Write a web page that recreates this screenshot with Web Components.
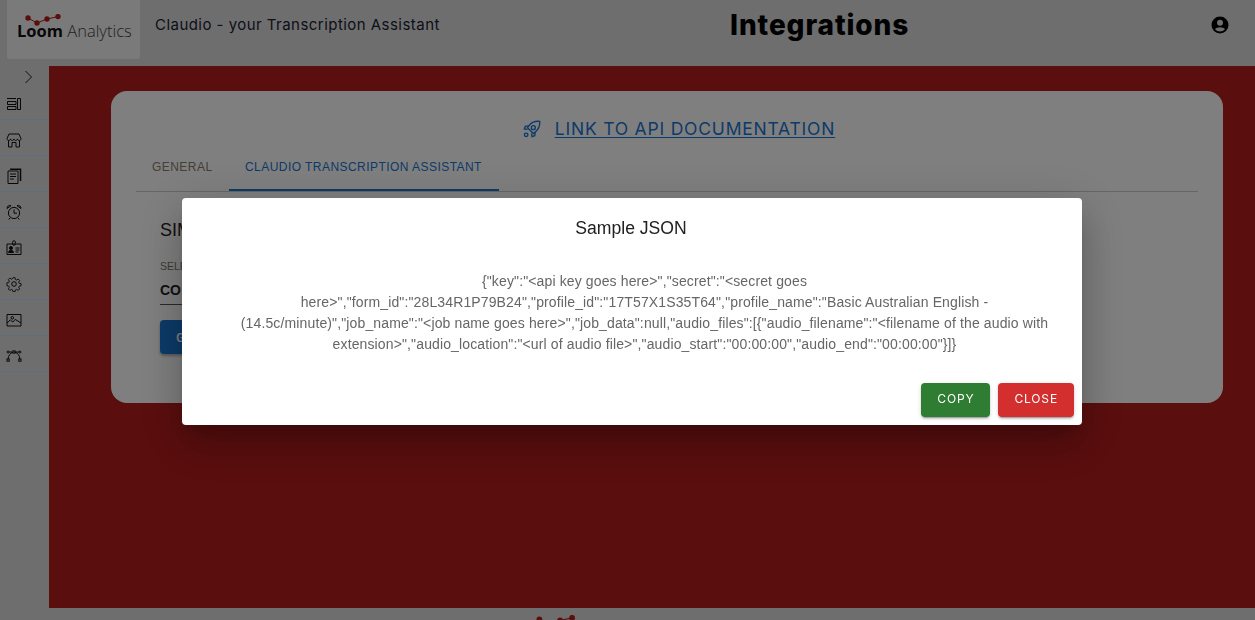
<!DOCTYPE html>
<html>
<head>
<meta charset="utf-8">
<title>Integrations</title>
<style>
    html, body { margin: 0; height: 100%; overflow: hidden; }
    body { font-family: "Liberation Sans", Arial, sans-serif; background: #dcdcdc; }
</style>
</head>
<body>
<app-shell>
    <app-header slot="header"></app-header>
    <side-nav slot="nav">
        <nav-item icon="list"></nav-item>
        <nav-item icon="shop"></nav-item>
        <nav-item icon="docs"></nav-item>
        <nav-item icon="alarm"></nav-item>
        <nav-item icon="badge"></nav-item>
        <nav-item icon="gear"></nav-item>
        <nav-item icon="image"></nav-item>
        <nav-item icon="curve"></nav-item>
    </side-nav>
    <integration-card></integration-card>
    <app-footer slot="footer"></app-footer>
</app-shell>
<sample-dialog heading="Sample JSON">
    {"key":"&lt;api key goes here&gt;","secret":"&lt;secret goes here&gt;","form_id":"28L34R1P79B24","profile_id":"17T57X1S35T64","profile_name":"Basic Australian English - (14.5c/minute)","job_name":"&lt;job name goes here&gt;","job_data":null,"audio_files":[{"audio_filename":"&lt;filename of the audio with extension&gt;","audio_location":"&lt;url of audio file&gt;","audio_start":"00:00:00","audio_end":"00:00:00"}]}
</sample-dialog>

<script>
    (function(window, document) {

        const LOGO_DOTS = `
            <svg width="44" height="14" viewBox="0 0 44 14">
                <path d="M4 4 L13 9 L23 5 L34 2.600" fill="none" stroke="#b71c1c" stroke-width="1"/>
                <circle cx="4" cy="4" r="2.700" fill="#b71c1c"/>
                <circle cx="13" cy="9" r="2.700" fill="#b71c1c"/>
                <circle cx="23" cy="5" r="2.700" fill="#b71c1c"/>
                <circle cx="34" cy="2.600" r="2.700" fill="#b71c1c"/>
            </svg>`;

        // Sidebar icons, all on a 16 unit grid.
        const ICONS = {
            list: '<path d="M1 2.500h9M1.500 5.500h8.500v3H1.500zM1.500 10.500h8.500v3H1.500zM11.500 2.500h3v11h-3z"/>',
            shop: '<path d="M3 2h10l2 4.600c0 1.200-.8 1.900-1.800 1.900-1 0-1.600-.7-1.700-1.600 0 .9-.9 1.600-1.800 1.600S8.100 7.800 8 6.900c-.1.900-.8 1.600-1.700 1.600S4.600 7.800 4.500 6.900c-.1.900-.7 1.600-1.700 1.600S1 7.800 1 6.600z"/><path d="M2.500 8.500V15h3.500v-4.500h4V15h3.500V8.500"/>',
            docs: '<path d="M2 3h10v12.500H2z"/><path d="M4 1.200h10.500V13" stroke-width="1.500"/><path d="M4 6h6M4 8.500h6M4 11h4"/>',
            alarm: '<circle cx="8" cy="9" r="5.600"/><path d="M8 5.500V9.200h3M1 4.500a2.800 2.800 0 0 1 4-2.800zM15 4.500a2.800 2.800 0 0 0-4-2.800zM4 14l-1.300 1.500M12 14l1.300 1.500"/>',
            badge: '<path d="M1 4h14v10.500H1z"/><rect x="6.600" y=".8" width="2.800" height="4.500" rx="1.400"/><circle cx="5" cy="8" r="1.500" fill="currentColor"/><path d="M2.600 12.500c0-3 4.800-3 4.800 0z" fill="currentColor"/><path d="M9.500 8h4M9.500 10h4M9.500 12h3"/>',
            gear: '<circle cx="8" cy="8" r="2.300"/><path d="M6.800 1h2.400l.4 2 1.300.6 1.800-1.100 1.600 1.600-1.100 1.800.6 1.300 2 .4v2.400l-2 .4-.6 1.300 1.100 1.800-1.600 1.600-1.800-1.100-1.300.6-.4 1.900H6.800l-.4-1.900-1.300-.6-1.800 1.100-1.600-1.600 1.100-1.800-.6-1.300-2-.4V6.600l2-.4.6-1.300-1.100-1.800 1.600-1.600 1.800 1.100 1.300-.6z" transform="translate(.8 .8) scale(.9)"/>',
            image: '<path d="M1 2.500h14v11.500H1z"/><circle cx="6.300" cy="5.800" r="1.300"/><path d="M1 11l3.300-3 2.600 2 2.300-2.600L15 11"/>',
            curve: '<rect x="1" y="11" width="2.200" height="2.200"/><rect x="12.800" y="11" width="2.200" height="2.200"/><circle cx="2.100" cy="4" r="1"/><circle cx="13.900" cy="4" r="1"/><rect x="6.900" y="2.900" width="2.200" height="2.200"/><path d="M3.100 4h3.800M9.100 4h3.800M2.100 11C2.300 7.500 4.200 5 6.900 4.300M13.900 11C13.700 7.500 11.800 5 9.100 4.300"/>'
        };

        function define(name, markup) {
            customElements.define(name, class extends HTMLElement {
                constructor() {
                    super();
                    this.attachShadow({mode: 'open'}).innerHTML = markup;
                }
            });
        }

        define('app-shell', `
            <style>
                :host { display: grid; grid-template: 66px 542px auto / 49px 1fr; height: 100vh; overflow: hidden; }
                ::slotted([slot=header]), ::slotted([slot=footer]) { grid-column: 1 / -1; }
                main { background: #b71c1c; padding: 25px 32px 0 62px; min-width: 0; }
            </style>
            <slot name="header"></slot>
            <slot name="nav"></slot>
            <main><slot></slot></main>
            <slot name="footer"></slot>
        `);

        define('app-header', `
            <style>
                :host { display: flex; background: #dcdcdc; color: #111; font-family: "Inter", sans-serif; }
                .logo { width: 133px; height: 59px; margin-left: 7px; background: #f4f4f4; border-radius: 0 0 3px 3px;
                    display: flex; flex-direction: column; align-items: flex-start; padding: 12px 0 0 9px; box-sizing: border-box; }
                .mark { margin-left: 8px; height: 14px; }
                .word { font: 700 16.500px/20px "Open Sans", sans-serif; color: #111; margin: -5px 0 0 1px; white-space: nowrap; }
                .word span { font-weight: 300; color: #444; }
                .tag { width: 300px; margin: 16px 0 0 15px; font-size: 15px; line-height: 18px; white-space: nowrap; letter-spacing: .46px; color: #1a2233; }
                h1 { flex: 1; margin: 8px 0 0 0; padding-left: 275px; font-size: 28px; line-height: 34px; font-weight: 800; color: #000; letter-spacing: .9px; white-space: nowrap; }
                .user { margin: 15px 25px 0 0; }
            </style>
            <div class="logo">
                <div class="mark">${LOGO_DOTS}</div>
                <div class="word">Loom <span>Analytics</span></div>
            </div>
            <div class="tag">Claudio - your Transcription Assistant</div>
            <h1>Integrations</h1>
            <svg class="user" width="20" height="20" viewBox="0 0 20 20">
                <path fill-rule="evenodd" d="M10 1.500a8.500 8.500 0 1 0 0 17 8.500 8.500 0 0 0 0-17zM10 4.700a3 3 0 1 1 0 6 3 3 0 0 1 0-6zM10 16.500a6.600 6.600 0 0 1-5-2.300c.6-1.300 3-2 5-2s4.400.7 5 2a6.600 6.600 0 0 1-5 2.300z" fill="#000"/>
            </svg>
        `);

        define('side-nav', `
            <style>
                :host { display: block; background: #dcdcdc; }
                .toggle { height: 18px; display: flex; justify-content: flex-end; padding-right: 14px; }
            </style>
            <div class="toggle">
                <svg width="12" height="18" viewBox="0 0 12 18"><path d="M2.500 5 L8.500 11 L2.500 17" fill="none" stroke="#222" stroke-width="1"/></svg>
            </div>
            <slot></slot>
        `);

        class NavItem extends HTMLElement {
            constructor() {
                super();
                const shadowRoot = this.attachShadow({mode: 'open'});
                shadowRoot.innerHTML = `
                    <style>
                        :host { display: flex; align-items: center; box-sizing: border-box; height: 36px; padding: 5px 0 0 6px; border-bottom: 1px solid #bedcff; color: #111; }
                        svg { fill: none; stroke: currentColor; stroke-width: 1; }
                    </style>
                    <svg width="16" height="16" viewBox="0 0 16 16">${ICONS[this.getAttribute('icon')] || ''}</svg>
                `;
            }
        }
        customElements.define('nav-item', NavItem);

        define('tab-bar', `
            <style>
                :host { display: flex; height: 48px; border-bottom: 1px solid #ccc; font: 12px/46px "Liberation Sans", sans-serif; letter-spacing: .45px; box-sizing: border-box; white-space: nowrap; }
                div { padding: 0 16px; box-sizing: border-box; }
                .general { color: #8b7d6f; width: 93px; }
                .active { color: #1976d2; height: 47px; width: 270px; border-bottom: 2px solid #1976d2; }
            </style>
            <div class="general">GENERAL</div>
            <div class="active">CLAUDIO TRANSCRIPTION ASSISTANT</div>
        `);

        define('integration-card', `
            <style>
                :host { display: block; height: 312px; background: #fff; border-radius: 16px; padding: 0 25px; box-sizing: border-box; }
                .link { display: flex; justify-content: center; align-items: center; gap: 14px; height: 53px; padding: 22px 0 0 24px; box-sizing: border-box; color: #1976d2; }
                a { font: 400 17.500px/20px "Inter", sans-serif; color: inherit; text-decoration: underline; text-underline-offset: 2px; letter-spacing: .79px; white-space: nowrap; }
                svg { fill: none; stroke: currentColor; stroke-width: 1.500; }
                .body { padding: 26px 0 0 24px; }
                h2 { margin: 0; font: 400 18px/24px "Liberation Sans", sans-serif; color: #222; }
                .field { width: 150px; margin-top: 17px; border-bottom: 1px solid #555; height: 46px; box-sizing: border-box; }
                label { display: block; font-size: 10.500px; line-height: 14px; color: #777; }
                .value { font: 700 14px/24px "Liberation Sans", sans-serif; color: #222; margin-top: 5px; }
                .go { display: flex; align-items: center; width: 150px; height: 34px; margin-top: 15px; padding-left: 16px; box-sizing: border-box; border-radius: 4px;
                    background: #1976d2; color: #fff; font: 500 13px "Roboto", sans-serif; box-shadow: 0 2px 3px rgba(0,0,0,.3); }
            </style>
            <div class="link">
                <svg width="18" height="18" viewBox="0 0 20 20">
                    <path d="M18.500 1.500c-4.500-.5-8.500 1-11 3.800L5 8.500l6.500 6.500 3-2.500c3-2.700 4.400-6.800 4-11z"/>
                    <circle cx="11.500" cy="8.500" r="2.200"/>
                    <path d="M6.500 6.500 2.500 7 1.500 10l3.500.5M13.500 13.500 13 17.500l-3 1-.5-3.500"/>
                    <circle cx="3.500" cy="16.500" r="2"/>
                </svg>
                <a>LINK TO API DOCUMENTATION</a>
            </div>
            <tab-bar></tab-bar>
            <div class="body">
                <h2>SIM</h2>
                <div class="field">
                    <label>SELE</label>
                    <div class="value">CO</div>
                </div>
                <div class="go">G</div>
            </div>
        `);

        define('app-footer', `
            <style>
                :host { display: block; background: #dcdcdc; height: 40px; padding: 7px 0 0 535px; box-sizing: border-box; }
                svg { width: 48px; height: 15.300px; }
            </style>
            ${LOGO_DOTS}
        `);

        define('action-button', `
            <style>
                :host { display: inline-flex; align-items: center; justify-content: center; height: 34px; padding: 0 16px 3px; box-sizing: border-box; border-radius: 4px;
                    font: 400 12px "Inter", "Roboto", sans-serif; letter-spacing: .85px; color: #fff; background: var(--button-color);
                    box-shadow: 0 3px 1px -2px rgba(0,0,0,.2), 0 2px 2px 0 rgba(0,0,0,.14), 0 1px 5px 0 rgba(0,0,0,.12); }
            </style>
            <slot></slot>
        `);

        class SampleDialog extends HTMLElement {
            constructor() {
                super();
                const shadowRoot = this.attachShadow({mode: 'open'});
                shadowRoot.innerHTML = `
                    <style>
                        :host { position: fixed; inset: 0; display: flex; justify-content: center; padding-top: 198px; box-sizing: border-box; background: rgba(0,0,0,.5); }
                        .dialog { width: 900px; height: 227px; margin-left: 9px; background: #fff; border-radius: 4px; box-sizing: border-box; padding: 18px 24px 8px; display: flex; flex-direction: column;
                            box-shadow: 0 11px 15px -7px rgba(0,0,0,.2), 0 24px 38px 3px rgba(0,0,0,.14), 0 9px 46px 8px rgba(0,0,0,.12); }
                        h3 { margin: 0; padding-right: 2px; font: 400 17.600px/24px "Liberation Sans", sans-serif; text-align: center; color: #212121; }
                        p { flex: 1; margin: 31px 0 0; padding-left: 25px; font: 14px/21px "Liberation Sans", sans-serif; letter-spacing: .13px; text-align: center; color: #666; }
                        .actions { display: flex; justify-content: flex-end; gap: 8px; margin-right: -16px; }
                    </style>
                    <div class="dialog">
                        <h3></h3>
                        <p><slot></slot></p>
                        <div class="actions">
                            <action-button style="--button-color:#2e7d32">COPY</action-button>
                            <action-button style="--button-color:#d32f2f">CLOSE</action-button>
                        </div>
                    </div>
                `;
                shadowRoot.querySelector('h3').textContent = this.getAttribute('heading');
            }
        }
        customElements.define('sample-dialog', SampleDialog);

    })(window, document);
</script>
</body>
</html>
